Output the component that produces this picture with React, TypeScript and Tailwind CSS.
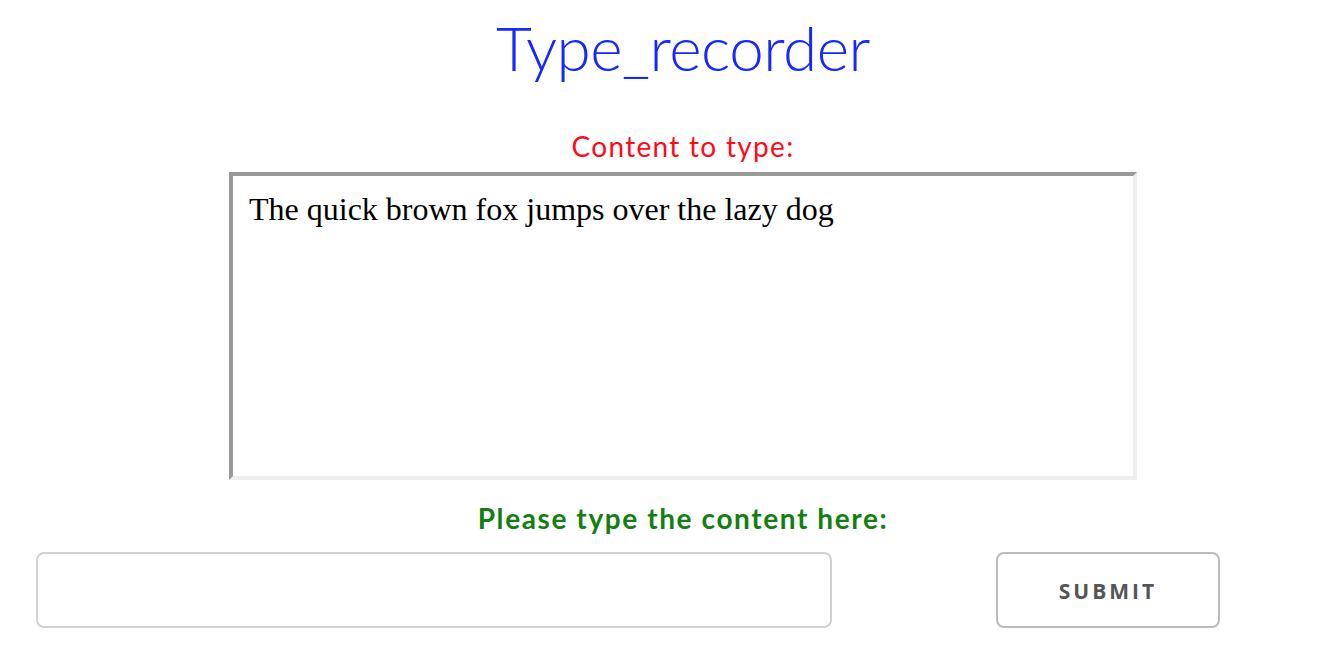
import React from "react";

export default function App() {
  return (
    <div className="w-[1334px] h-[650px] bg-white flex flex-col">
      <div className="flex flex-col items-center pl-[32px]">
        <h1 className="mt-[10px] h-[74px] leading-[74px] text-[62px] font-light text-[#1428ff] tracking-[-0.5px] font-['Lato','Open_Sans',sans-serif]">
          Type_recorder
        </h1>
        <div className="mt-[45px] h-[34px] leading-[34px] text-[28px] tracking-[1.3px] text-[#ff0a1a] font-['Lato','Open_Sans',sans-serif]">
          Content to type:
        </div>
        <div className="mt-[9px] w-[908px] h-[308px] border-4 border-t-[#999999] border-l-[#999999] border-r-[#eeeeee] border-b-[#eeeeee] px-[16px] pt-[13px] text-[32px] leading-[40px] text-black font-['Liberation_Serif',serif]">
          The quick brown fox jumps over the lazy dog
        </div>
        <div className="mt-[21px] h-[34px] leading-[34px] text-[28px] font-bold tracking-[1.6px] text-[#118011] font-['Lato','Open_Sans',sans-serif]">
          Please type the content here:
        </div>
      </div>
      <div className="mt-[17px] w-full flex pl-[36px]">
        <div className="w-[796px] h-[76px] border-2 border-[#d1d1d1] rounded-[8px]" />
        <button className="ml-[164px] w-[224px] h-[76px] pt-[3px] border-2 border-[#bbbbbb] rounded-[8px] text-[21px] font-bold tracking-[3px] text-[#555555] font-['Open_Sans','Liberation_Sans',sans-serif]">
          SUBMIT
        </button>
      </div>
    </div>
  );
}
